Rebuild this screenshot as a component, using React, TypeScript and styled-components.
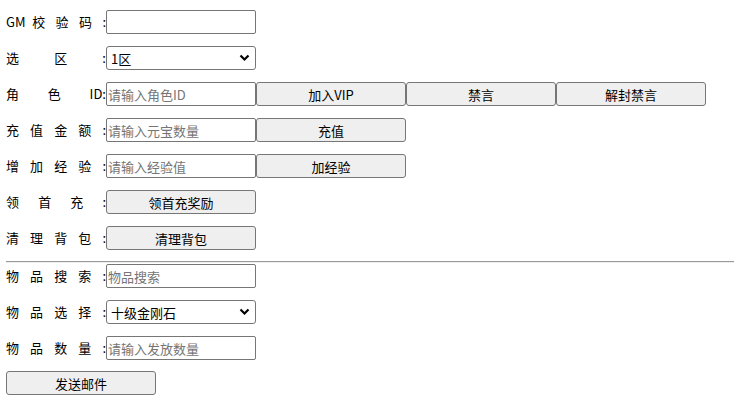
import React from "react";
import styled, { createGlobalStyle } from "styled-components";

const Global = createGlobalStyle`
  body {
    margin: 0;
    background: #fff;
    font-family: "Noto Sans CJK SC", "Microsoft YaHei", sans-serif;
    font-size: 13px;
    color: #000;
  }
`;

const Page = styled.div`
  padding: 10px 0 0 6px;
`;

const Section = styled.div`
  display: flex;
  flex-direction: column;
  gap: 12px;
`;

const Row = styled.div`
  display: flex;
  align-items: center;
  height: 24px;
`;

const Label = styled.span`
  width: 100px;
  text-align: justify;
  text-align-last: justify;
  white-space: nowrap;
  line-height: 24px;
`;

const Field = styled.input`
  box-sizing: border-box;
  width: 150px;
  height: 24px;
  margin: 0;
  padding: 0 1px;
  border: 1px solid #767676;
  border-radius: 2px;
  font: inherit;
  font-size: 13px;
  color: #000;
  outline: none;
  &::placeholder {
    color: #757575;
  }
`;

const SelectWrap = styled.div`
  position: relative;
  width: 150px;
  height: 24px;
`;

const Select = styled.select`
  box-sizing: border-box;
  width: 150px;
  height: 24px;
  margin: 0;
  padding: 0 0 0 4px;
  border: 1px solid #767676;
  border-radius: 3px;
  background: #fff;
  font: inherit;
  font-size: 13px;
  color: #000;
  appearance: none;
`;

const Chevron = styled.svg`
  position: absolute;
  right: 6px;
  top: 8px;
  pointer-events: none;
`;

const Button = styled.button<{ $w?: number }>`
  box-sizing: border-box;
  width: ${(p) => p.$w ?? 150}px;
  height: 24px;
  margin: 0;
  padding: 0;
  border: 1px solid #767676;
  border-radius: 3px;
  background: #efefef;
  font: inherit;
  font-size: 13px;
  color: #000;
`;

const Rule = styled.hr`
  margin: 11px 0 1px;
  border: none;
  border-top: 1px solid #9a9a9a;
  border-bottom: 1px solid #eeeeee;
`;

const SendRow = styled.div`
  margin-top: 11px;
`;

const Dropdown: React.FC<{ options: string[] }> = ({ options }) => (
  <SelectWrap>
    <Select defaultValue={options[0]}>
      {options.map((o) => (
        <option key={o}>{o}</option>
      ))}
    </Select>
    <Chevron width="11" height="8" viewBox="0 0 11 8">
      <path d="M1.5 1.5 L5.5 5.5 L9.5 1.5" fill="none" stroke="#000" strokeWidth="2.2" />
    </Chevron>
  </SelectWrap>
);

const App: React.FC = () => {
  return (
    <Page>
      <Global />
      <Section>
        <Row>
          <Label>GM 校 验 码 :</Label>
          <Field type="text" />
        </Row>
        <Row>
          <Label>选 区 :</Label>
          <Dropdown options={["1区", "2区", "3区"]} />
        </Row>
        <Row>
          <Label>角 色 ID:</Label>
          <Field type="text" placeholder="请输入角色ID" />
          <Button>加入VIP</Button>
          <Button>禁言</Button>
          <Button>解封禁言</Button>
        </Row>
        <Row>
          <Label>充 值 金 额 :</Label>
          <Field type="number" placeholder="请输入元宝数量" />
          <Button>充值</Button>
        </Row>
        <Row>
          <Label>增 加 经 验 :</Label>
          <Field type="number" placeholder="请输入经验值" />
          <Button>加经验</Button>
        </Row>
        <Row>
          <Label>领 首 充 :</Label>
          <Button>领首充奖励</Button>
        </Row>
        <Row>
          <Label>清 理 背 包 :</Label>
          <Button>清理背包</Button>
        </Row>
      </Section>
      <Rule />
      <Section>
        <Row>
          <Label>物 品 搜 索 :</Label>
          <Field type="text" placeholder="物品搜索" />
        </Row>
        <Row>
          <Label>物 品 选 择 :</Label>
          <Dropdown options={["十级金刚石", "九级金刚石"]} />
        </Row>
        <Row>
          <Label>物 品 数 量 :</Label>
          <Field type="number" placeholder="请输入发放数量" />
        </Row>
      </Section>
      <SendRow>
        <Button>发送邮件</Button>
      </SendRow>
    </Page>
  );
};

export default App;
